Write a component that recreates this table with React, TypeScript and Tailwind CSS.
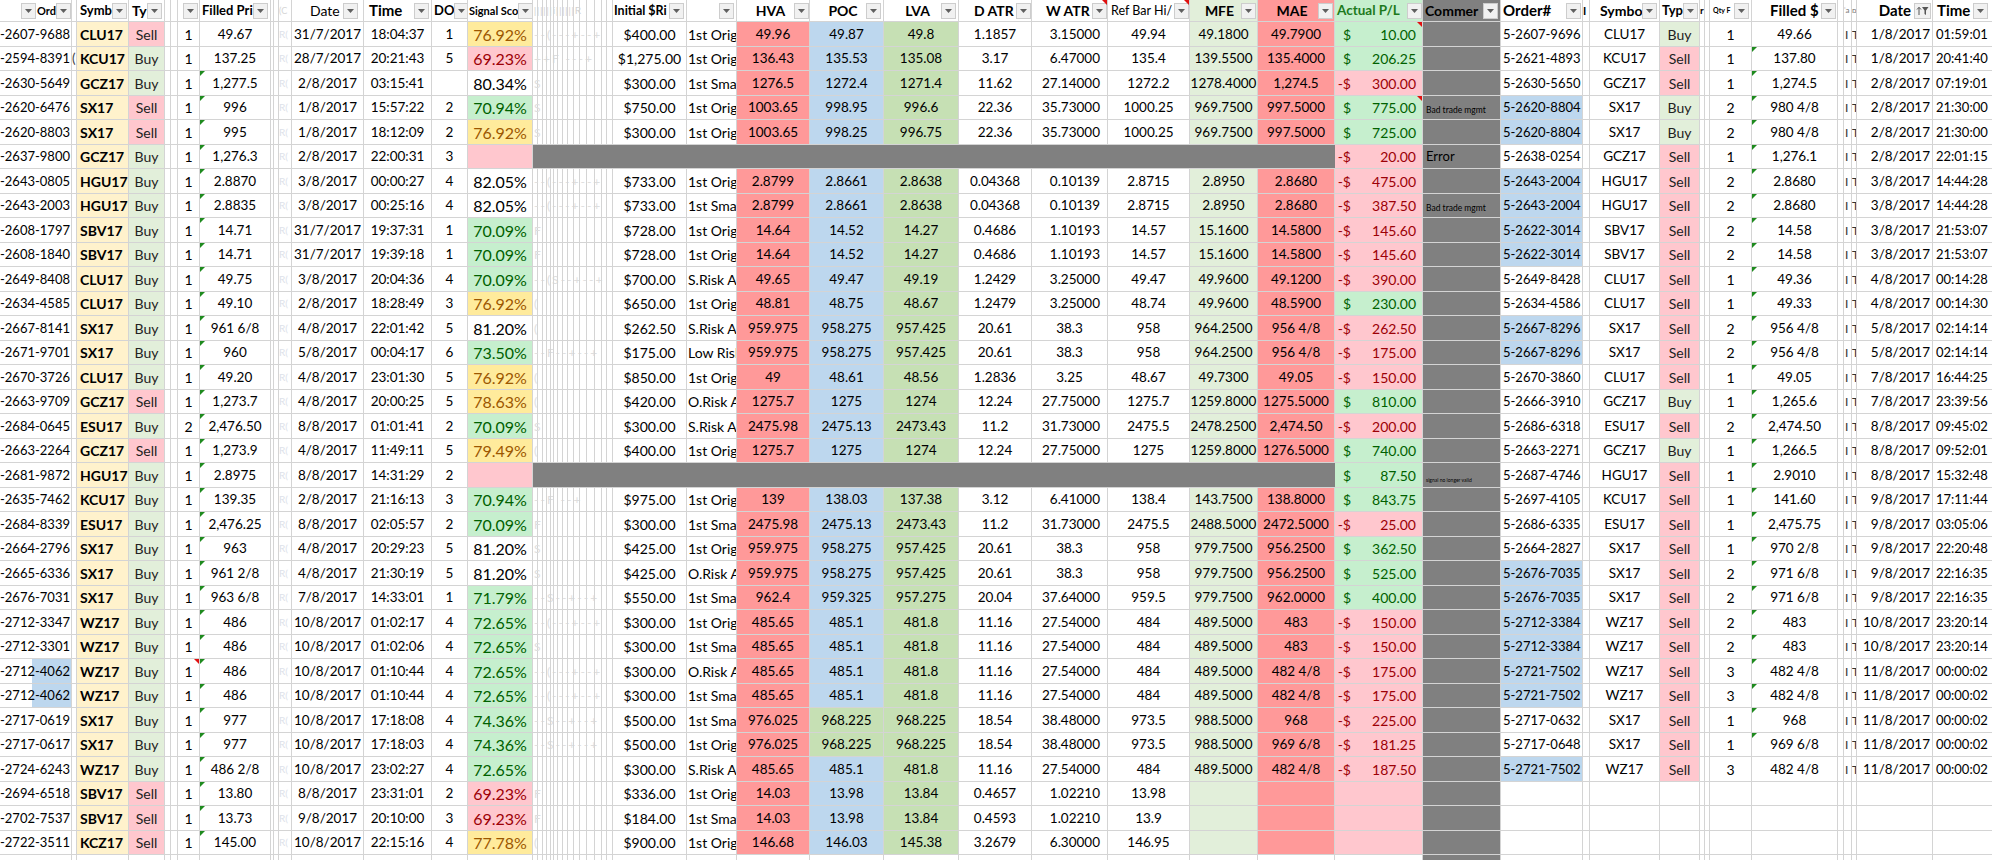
import React from 'react';

type Tone = 'y' | 'p' | 'g' | 'w';
// left | middle | P/L | comment | right
type RowData = [string, string, string, string, string];

const ROWS: RowData[] = [
  ['-2607-9688|CLU17|Sell|1|49.67|31/7/2017|18:04:37|1|76.92%|y', '$400.00|1st Orig|49.96|49.87|49.8|1.1857|3.15000|49.94|49.1800|49.7900', '10.00', '', '5-2607-9696|CLU17|Buy|1|49.66|1/8/2017|01:59:01'],
  ['-2594-8391|KCU17|Buy|1|137.25|28/7/2017|20:21:43|5|69.23%|p', '$1,275.00|1st Orig|136.43|135.53|135.08|3.17|6.47000|135.4|139.5500|135.4000', '206.25', '', '5-2621-4893|KCU17|Sell|1|137.80|1/8/2017|20:41:40'],
  ['-2630-5649|GCZ17|Buy|1|1,277.5|2/8/2017|03:15:41||80.34%|w', '$300.00|1st Sma|1276.5|1272.4|1271.4|11.62|27.14000|1272.2|1278.4000|1,274.5', '-300.00', '', '5-2630-5650|GCZ17|Sell|1|1,274.5|2/8/2017|07:19:01'],
  ['-2620-6476|SX17|Sell|1|996|1/8/2017|15:57:22|2|70.94%|g', '$750.00|1st Orig|1003.65|998.95|996.6|22.36|35.73000|1000.25|969.7500|997.5000', '775.00', 'Bad trade mgmt', '5-2620-8804|SX17|Buy|2|980 4/8|2/8/2017|21:30:00'],
  ['-2620-8803|SX17|Sell|1|995|1/8/2017|18:12:09|2|76.92%|y', '$300.00|1st Orig|1003.65|998.25|996.75|22.36|35.73000|1000.25|969.7500|997.5000', '725.00', '', '5-2620-8804|SX17|Buy|2|980 4/8|2/8/2017|21:30:00'],
  ['-2637-9800|GCZ17|Buy|1|1,276.3|2/8/2017|22:00:31|3||p', '', '-20.00', 'Error', '5-2638-0254|GCZ17|Sell|1|1,276.1|2/8/2017|22:01:15'],
  ['-2643-0805|HGU17|Buy|1|2.8870|3/8/2017|00:00:27|4|82.05%|w', '$733.00|1st Orig|2.8799|2.8661|2.8638|0.04368|0.10139|2.8715|2.8950|2.8680', '-475.00', '', '5-2643-2004|HGU17|Sell|2|2.8680|3/8/2017|14:44:28'],
  ['-2643-2003|HGU17|Buy|1|2.8835|3/8/2017|00:25:16|4|82.05%|w', '$733.00|1st Sma|2.8799|2.8661|2.8638|0.04368|0.10139|2.8715|2.8950|2.8680', '-387.50', 'Bad trade mgmt', '5-2643-2004|HGU17|Sell|2|2.8680|3/8/2017|14:44:28'],
  ['-2608-1797|SBV17|Buy|1|14.71|31/7/2017|19:37:31|1|70.09%|g', '$728.00|1st Orig|14.64|14.52|14.27|0.4686|1.10193|14.57|15.1600|14.5800', '-145.60', '', '5-2622-3014|SBV17|Sell|2|14.58|3/8/2017|21:53:07'],
  ['-2608-1840|SBV17|Buy|1|14.71|31/7/2017|19:39:18|1|70.09%|g', '$728.00|1st Orig|14.64|14.52|14.27|0.4686|1.10193|14.57|15.1600|14.5800', '-145.60', '', '5-2622-3014|SBV17|Sell|2|14.58|3/8/2017|21:53:07'],
  ['-2649-8408|CLU17|Buy|1|49.75|3/8/2017|20:04:36|4|70.09%|g', '$700.00|S.Risk A|49.65|49.47|49.19|1.2429|3.25000|49.47|49.9600|49.1200', '-390.00', '', '5-2649-8428|CLU17|Sell|1|49.36|4/8/2017|00:14:28'],
  ['-2634-4585|CLU17|Buy|1|49.10|2/8/2017|18:28:49|3|76.92%|y', '$650.00|1st Orig|48.81|48.75|48.67|1.2479|3.25000|48.74|49.9600|48.5900', '230.00', '', '5-2634-4586|CLU17|Sell|1|49.33|4/8/2017|00:14:30'],
  ['-2667-8141|SX17|Buy|1|961 6/8|4/8/2017|22:01:42|5|81.20%|w', '$262.50|S.Risk A|959.975|958.275|957.425|20.61|38.3|958|964.2500|956 4/8', '-262.50', '', '5-2667-8296|SX17|Sell|2|956 4/8|5/8/2017|02:14:14'],
  ['-2671-9701|SX17|Buy|1|960|5/8/2017|00:04:17|6|73.50%|g', '$175.00|Low Risk|959.975|958.275|957.425|20.61|38.3|958|964.2500|956 4/8', '-175.00', '', '5-2667-8296|SX17|Sell|2|956 4/8|5/8/2017|02:14:14'],
  ['-2670-3726|CLU17|Buy|1|49.20|4/8/2017|23:01:30|5|76.92%|y', '$850.00|1st Orig|49|48.61|48.56|1.2836|3.25|48.67|49.7300|49.05', '-150.00', '', '5-2670-3860|CLU17|Sell|1|49.05|7/8/2017|16:44:25'],
  ['-2663-9709|GCZ17|Sell|1|1,273.7|4/8/2017|20:00:25|5|78.63%|y', '$420.00|O.Risk A|1275.7|1275|1274|12.24|27.75000|1275.7|1259.8000|1275.5000', '810.00', '', '5-2666-3910|GCZ17|Buy|1|1,265.6|7/8/2017|23:39:56'],
  ['-2684-0645|ESU17|Buy|2|2,476.50|8/8/2017|01:01:41|2|70.09%|g', '$300.00|S.Risk A|2475.98|2475.13|2473.43|11.2|31.73000|2475.5|2478.2500|2,474.50', '-200.00', '', '5-2686-6318|ESU17|Sell|2|2,474.50|8/8/2017|09:45:02'],
  ['-2663-2264|GCZ17|Sell|1|1,273.9|4/8/2017|11:49:11|5|79.49%|y', '$400.00|1st Orig|1275.7|1275|1274|12.24|27.75000|1275|1259.8000|1276.5000', '740.00', '', '5-2663-2271|GCZ17|Buy|1|1,266.5|8/8/2017|09:52:01'],
  ['-2681-9872|HGU17|Buy|1|2.8975|8/8/2017|14:31:29|2||p', '', '87.50', 'signal no longer valid', '5-2687-4746|HGU17|Sell|1|2.9010|8/8/2017|15:32:48'],
  ['-2635-7462|KCU17|Buy|1|139.35|2/8/2017|21:16:13|3|70.94%|g', '$975.00|1st Orig|139|138.03|137.38|3.12|6.41000|138.4|143.7500|138.8000', '843.75', '', '5-2697-4105|KCU17|Sell|1|141.60|9/8/2017|17:11:44'],
  ['-2684-8339|ESU17|Buy|1|2,476.25|8/8/2017|02:05:57|2|70.09%|g', '$300.00|1st Sma|2475.98|2475.13|2473.43|11.2|31.73000|2475.5|2488.5000|2472.5000', '-25.00', '', '5-2686-6335|ESU17|Sell|1|2,475.75|9/8/2017|03:05:06'],
  ['-2664-2796|SX17|Buy|1|963|4/8/2017|20:29:23|5|81.20%|w', '$425.00|1st Orig|959.975|958.275|957.425|20.61|38.3|958|979.7500|956.2500', '362.50', '', '5-2664-2827|SX17|Sell|1|970 2/8|9/8/2017|22:20:48'],
  ['-2665-6336|SX17|Buy|1|961 2/8|4/8/2017|21:30:19|5|81.20%|w', '$425.00|O.Risk A|959.975|958.275|957.425|20.61|38.3|958|979.7500|956.2500', '525.00', '', '5-2676-7035|SX17|Sell|2|971 6/8|9/8/2017|22:16:35'],
  ['-2676-7031|SX17|Buy|1|963 6/8|7/8/2017|14:33:01|1|71.79%|g', '$550.00|1st Sma|962.4|959.325|957.275|20.04|37.64000|959.5|979.7500|962.0000', '400.00', '', '5-2676-7035|SX17|Sell|2|971 6/8|9/8/2017|22:16:35'],
  ['-2712-3347|WZ17|Buy|1|486|10/8/2017|01:02:17|4|72.65%|g', '$300.00|1st Orig|485.65|485.1|481.8|11.16|27.54000|484|489.5000|483', '-150.00', '', '5-2712-3384|WZ17|Sell|2|483|10/8/2017|23:20:14'],
  ['-2712-3301|WZ17|Buy|1|486|10/8/2017|01:02:06|4|72.65%|g', '$300.00|1st Sma|485.65|485.1|481.8|11.16|27.54000|484|489.5000|483', '-150.00', '', '5-2712-3384|WZ17|Sell|2|483|10/8/2017|23:20:14'],
  ['-2712-4062|WZ17|Buy|1|486|10/8/2017|01:10:44|4|72.65%|g', '$300.00|O.Risk A|485.65|485.1|481.8|11.16|27.54000|484|489.5000|482 4/8', '-175.00', '', '5-2721-7502|WZ17|Sell|3|482 4/8|11/8/2017|00:00:02'],
  ['-2712-4062|WZ17|Buy|1|486|10/8/2017|01:10:44|4|72.65%|g', '$300.00|1st Sma|485.65|485.1|481.8|11.16|27.54000|484|489.5000|482 4/8', '-175.00', '', '5-2721-7502|WZ17|Sell|3|482 4/8|11/8/2017|00:00:02'],
  ['-2717-0619|SX17|Buy|1|977|10/8/2017|17:18:08|4|74.36%|g', '$500.00|1st Sma|976.025|968.225|968.225|18.54|38.48000|973.5|988.5000|968', '-225.00', '', '5-2717-0632|SX17|Sell|1|968|11/8/2017|00:00:02'],
  ['-2717-0617|SX17|Buy|1|977|10/8/2017|17:18:03|4|74.36%|g', '$500.00|1st Orig|976.025|968.225|968.225|18.54|38.48000|973.5|988.5000|969 6/8', '-181.25', '', '5-2717-0648|SX17|Sell|1|969 6/8|11/8/2017|00:00:02'],
  ['-2724-6243|WZ17|Buy|1|486 2/8|10/8/2017|23:02:27|4|72.65%|g', '$300.00|S.Risk A|485.65|485.1|481.8|11.16|27.54000|484|489.5000|482 4/8', '-187.50', '', '5-2721-7502|WZ17|Sell|3|482 4/8|11/8/2017|00:00:02'],
  ['-2694-6518|SBV17|Sell|1|13.80|8/8/2017|23:31:01|2|69.23%|p', '$336.00|1st Orig|14.03|13.98|13.84|0.4657|1.02210|13.98||', '', '', ''],
  ['-2702-7537|SBV17|Sell|1|13.73|9/8/2017|20:10:00|3|69.23%|p', '$184.00|1st Sma|14.03|13.98|13.84|0.4593|1.02210|13.9||', '', '', ''],
  ['-2722-3511|KCZ17|Sell|1|145.00|10/8/2017|22:15:16|4|77.78%|y', '$900.00|1st Orig|146.68|146.03|145.38|3.2679|6.30000|146.95||', '', '', ''],
];

// leftover helper text in the hidden-ish narrow columns
const FAINT = [
  '--(---+--+', '++F ---+', 'S', 'S', 'S', '', '--(---+--+', '--(---+--+', 'F', 'F', '--(S--+--+', '(', '(', '--F--+--+', '(', '(', 'S',
  '(', '', '--F --+', 'F', 'S', 'S', '--S--+--+', '--(---+--+', 'S', '--(---+--+', '--(---+--+', '--S--+--+', '--S--+--+', '', 'F', 'F', '(',
];

const BLUE_ORDER = new Set([3, 4, 6, 7, 8, 9, 12, 13, 22, 23, 24, 25, 26, 27, 30]);
const BLUE_LEFT = new Set([26, 27]);
const POC_GREEN = new Set([28, 29]);
const PL_NOTE = new Set([0, 3]);

const NARROW = ['w-[5px]', 'w-[5px]', 'w-[4px]', 'w-[4px]', 'w-[3px]', 'w-[4px]', 'w-[5px]', 'w-[5px]', 'w-[6px]', 'w-[6px]', 'w-[7px]', 'w-[8px]', 'w-[7px]', 'w-[5px]', 'w-[6px]'];

const TONE: Record<Tone, string> = {
  y: 'bg-[#ffeb9c] text-[#9c5700]',
  p: 'bg-[#ffc7ce] text-[#9c0006]',
  g: 'bg-[#c6efce] text-[#006100]',
  w: 'bg-white text-black',
};

const cell = 'relative flex h-full shrink-0 items-center overflow-hidden whitespace-nowrap border-r border-[#d4d4d4]';
const spill = 'relative flex h-full shrink-0 items-center whitespace-nowrap border-r border-[#d4d4d4]';
const sideBg = (t: string) => (t === 'Sell' ? 'bg-[#ffc7ce]' : t === 'Buy' ? 'bg-[#e2efda]' : '');

const DD = ({ className = 'mr-[2px]' }: { className?: string }) => (
  <span className={`flex h-[16px] w-[15px] shrink-0 items-center justify-center border border-[#cdcdcd] bg-[#f1f1f1] ${className}`}>
    <svg width="7" height="4" viewBox="0 0 7 4">
      <path d="M0 0h7L3.5 4z" fill="#5f5f5f" />
    </svg>
  </span>
);

const GreenTick = () => <span className="absolute left-0 top-0 h-0 w-0 border-r-[5px] border-t-[5px] border-r-transparent border-t-[#1e8a1e]" />;
const RedTick = () => <span className="absolute right-0 top-0 h-0 w-0 border-l-[5px] border-t-[5px] border-l-transparent border-t-[#e01010]" />;

const Header: React.FC = () => (
  <div className="flex h-[22px] border-b border-[#d4d4d4] text-[14px] font-bold text-black">
    <div className={`${cell} w-[72px] pl-[21px]`}>
      <DD className="" />
      <span className="flex-1 pl-[1px] text-[11px]">Ord</span>
      <DD />
    </div>
    <div className={`${cell} w-[5px]`} />
    <div className={`${cell} w-[52px]`}>
      <span className="flex-1 pl-[3px] text-[13px]">Symb</span>
      <DD className="mr-[1px]" />
    </div>
    <div className={`${cell} w-[36px]`}>
      <span className="flex-1 pl-[3px]">Ty</span>
      <DD />
    </div>
    <div className={`${cell} w-[6px]`} />
    <div className={`${cell} w-[7px]`} />
    <div className={`${cell} w-[22px] justify-end`}>
      <DD className="mr-[1px]" />
    </div>
    <div className={`${cell} w-[71px]`}>
      <span className="flex-1 pl-[2px] text-[13px]">Filled Pri</span>
      <DD className="mr-[2px]" />
    </div>
    <div className={`${cell} w-[3px]`} />
    <div className={`${cell} w-[5px]`} />
    <div className={`${cell} w-[13px] text-[9px] font-normal text-[#d6d6d6]`}>(C</div>
    <div className={`${cell} w-[72px]`}>
      <span className="flex-1 pl-[18px] font-normal">Date</span>
      <DD className="mr-[5px]" />
    </div>
    <div className={`${cell} w-[68px]`}>
      <span className="flex-1 pl-[5px] text-[15px]">Time</span>
      <DD />
    </div>
    <div className={`${cell} w-[36px]`}>
      <span className="flex-1 pl-[2px] text-[13px]">DO</span>
      <DD />
    </div>
    <div className={`${cell} w-[65px]`}>
      <span className="flex-1 pl-[1px] text-[11px]">Signal Sco</span>
      <DD className="mr-[0px]" />
    </div>
    {NARROW.map((w, k) => (
      <div key={k} className={`${k === 0 ? spill : cell} ${w} text-[10px] font-normal text-[#d2d2d2]`}>
        {k === 0 ? <span className="pl-[1px] tracking-[1px]">ǀǀǀǀǀǀiǀǀǀǀǀǀR</span> : null}
      </div>
    ))}
    <div className={`${cell} w-[74px]`}>
      <span className="flex-1 pl-[1px] text-[12.5px]">Initial $Ri</span>
      <DD />
    </div>
    <div className={`${cell} w-[50px] justify-end`}>
      <DD />
    </div>
    <div className={`${cell} w-[73px]`}>
      <span className="flex-1 pl-[10px] text-center">HVA</span>
      <DD className="mr-[0px]" />
    </div>
    <div className={`${cell} w-[74px]`}>
      <span className="flex-1 pl-[10px] text-center">POC</span>
      <DD />
    </div>
    <div className={`${cell} w-[75px]`}>
      <span className="flex-1 pl-[10px] text-center">LVA</span>
      <DD />
    </div>
    <div className={`${cell} w-[73px]`}>
      <span className="flex-1 pl-[15px]">D ATR</span>
      <DD className="mr-[0px]" />
    </div>
    <div className={`${cell} w-[76px]`}>
      <span className="flex-1 pl-[14px]">W ATR</span>
      <DD className="mr-[0px]" />
      <RedTick />
    </div>
    <div className={`${cell} w-[82px]`}>
      <span className="flex-1 pl-[3px] text-[12.5px] font-normal">Ref Bar Hi/</span>
      <DD className="mr-[0px]" />
      <RedTick />
    </div>
    <div className={`${cell} w-[68px] bg-[#e2efda]`}>
      <span className="flex-1 pl-[8px] text-center">MFE</span>
      <DD className="mr-[1px]" />
    </div>
    <div className={`${cell} w-[77px] bg-[#ff9999]`}>
      <span className="flex-1 pl-[8px] text-center">MAE</span>
      <DD className="mr-[1px]" />
    </div>
    <div className={`${cell} w-[88px] bg-[#c6efce]`}>
      <span className="flex-1 pl-[2px] text-[13.5px] text-[#1d7a1d]">Actual P/L</span>
      <DD className="mr-[0px]" />
    </div>
    <div className={`${cell} w-[78px] bg-[#808080]`}>
      <span className="flex-1 pl-[2px]">Commer</span>
      <DD />
    </div>
    <div className={`${cell} w-[82px]`}>
      <span className="flex-1 pl-[2px] text-[15px]">Order#</span>
      <DD className="mr-[1px]" />
    </div>
    <div className={`${cell} w-[7px] text-[11px]`}>I</div>
    <div className={`${cell} w-[70px]`}>
      <span className="flex-1 pl-[10px] text-[14px]">Symbo</span>
      <DD />
    </div>
    <div className={`${cell} w-[40px]`}>
      <span className="flex-1 pl-[2px] text-[13px]">Typ</span>
      <DD className="mr-[1px]" />
    </div>
    <div className={`${cell} w-[5px] text-[10px]`}>r</div>
    <div className={`${cell} w-[5px]`} />
    <div className={`${cell} w-[42px]`}>
      <span className="flex-1 pl-[3px] text-[7px]">Qty F</span>
      <DD />
    </div>
    <div className={`${cell} w-[86px]`}>
      <span className="flex-1 pl-[18px] text-[15px]">Filled $</span>
      <DD className="mr-[1px]" />
    </div>
    <div className={`${cell} w-[6px]`} />
    <div className={`${cell} w-[8px] text-[8px] font-normal text-[#777]`}>ʾa</div>
    <div className={`${cell} w-[5px] text-[8px] font-normal text-[#777]`}>ɒ</div>
    <div className={`${cell} w-[76px]`}>
      <span className="flex-1 pr-[3px] text-right text-[15px]">Date</span>
      <span className="mr-[1px] flex h-[16px] w-[17px] shrink-0 items-center justify-center border border-[#cdcdcd] bg-[#f1f1f1]">
        <svg width="13" height="10" viewBox="0 0 13 10">
          <path d="M3 9V1.5M1 3.5l2-2.2 2 2.2" stroke="#555" strokeWidth="1" fill="none" />
          <path d="M6 1h6.5L10 4.5V9L8.5 8V4.5z" fill="#555" />
        </svg>
      </span>
    </div>
    <div className={`${cell} w-[59px] border-r-0`}>
      <span className="flex-1 pl-[4px] text-[15px]">Time</span>
      <DD className="mr-[4px]" />
    </div>
  </div>
);

const DataRow: React.FC<{ row: RowData; i: number }> = ({ row, i }) => {
  const [l, m, pl, com, r] = row;
  const L = l.split('|');
  const M = m ? m.split('|') : null;
  const R = r ? r.split('|') : null;
  const tone = L[9] as Tone;
  const neg = pl.startsWith('-');
  const h = i % 2 === 0 ? 'h-[25px]' : 'h-[24px]';
  const watrRight = M ? /\.\d{5}$/.test(M[6]) : false;

  return (
    <div className={`flex border-b border-[#d4d4d4] text-[13.5px] text-black ${h}`}>
      <div className={`${cell} w-[72px] text-[13px] ${BLUE_LEFT.has(i) ? 'bg-[linear-gradient(to_right,#fff_32px,#bdd7ee_32px)]' : ''}`}>{L[0]}</div>
      <div className={`${cell} w-[5px] text-[#444]`}>{i === 1 ? '(' : ''}</div>
      <div className={`${cell} w-[52px] bg-[#fff2cc] pl-[3px] text-[14px] font-bold`}>{L[1]}</div>
      <div className={`${cell} w-[36px] justify-center text-[14px] text-[#222] ${sideBg(L[2])}`}>{L[2]}</div>
      <div className={`${cell} w-[6px]`} />
      <div className={`${cell} w-[7px]`} />
      <div className={`${cell} w-[22px] justify-center text-[14px]`}>
        {L[3]}
        {i === 26 ? <RedTick /> : null}
      </div>
      <div className={`${cell} w-[71px] justify-center`}>
        {i >= 2 ? <GreenTick /> : null}
        {L[4]}
      </div>
      <div className={`${cell} w-[3px]`} />
      <div className={`${cell} w-[5px]`} />
      <div className={`${cell} w-[13px] text-[10px] text-[#dde2ea]`}>R(</div>
      <div className={`${cell} w-[72px] justify-center`}>{L[5]}</div>
      <div className={`${cell} w-[68px] justify-center`}>{L[6]}</div>
      <div className={`${cell} w-[36px] justify-center`}>{L[7]}</div>
      <div className={`${cell} w-[65px] justify-center text-[16px] ${TONE[tone]}`}>{L[8]}</div>

      {M ? (
        <>
          {NARROW.map((w, k) => (
            <div key={k} className={`${k === 0 ? spill : cell} ${w} text-[12px] text-[#dedede]`}>
              {k === 0 && FAINT[i] ? <span className="pl-[1px] tracking-[2px]">{FAINT[i]}</span> : null}
            </div>
          ))}
          <div className={`${cell} w-[74px] justify-center text-[14px]`}>{M[0]}</div>
          <div className={`${cell} w-[50px] pl-[1px] text-[14px]`}>{M[1]}</div>
          <div className={`${cell} w-[73px] justify-center bg-[#ff9999]`}>{M[2]}</div>
          <div className={`${cell} w-[74px] justify-center ${POC_GREEN.has(i) ? 'bg-[#c6e0b4]' : 'bg-[#bdd7ee]'}`}>{M[3]}</div>
          <div className={`${cell} w-[75px] justify-center bg-[#c6e0b4]`}>{M[4]}</div>
          <div className={`${cell} w-[73px] justify-center`}>{M[5]}</div>
          <div className={`${cell} w-[76px] ${watrRight ? 'justify-end pr-[7px]' : 'justify-center'}`}>{M[6]}</div>
          <div className={`${cell} w-[82px] justify-center`}>{M[7]}</div>
          <div className={`${cell} w-[68px] justify-center bg-[#e2efda]`}>{M[8]}</div>
          <div className={`${cell} w-[77px] justify-center bg-[#ff9999]`}>{M[9]}</div>
        </>
      ) : (
        <div className="h-full w-[802px] shrink-0 bg-[#808080]" />
      )}

      <div className={`${cell} w-[88px] text-[14px] ${pl && !neg ? 'bg-[#c6efce] text-[#006100]' : 'bg-[#ffc7ce] text-[#9c0006]'}`}>
        {pl ? (
          <>
            <span className="w-[16px] shrink-0 text-right">{neg ? '-$' : '$'}</span>
            <span className="flex-1 pr-[6px] text-right">{neg ? pl.slice(1) : pl}</span>
          </>
        ) : null}
        {PL_NOTE.has(i) ? <RedTick /> : null}
      </div>
      <div className={`${cell} w-[78px] bg-[#808080] pl-[3px]`}>
        {com === 'Error' ? (
          <span className="text-[13px]">Error</span>
        ) : com === 'Bad trade mgmt' ? (
          <span className="pt-[5px] text-[8.5px]">Bad trade mgmt</span>
        ) : com ? (
          <span className="pt-[10px] text-[5px]">{com}</span>
        ) : null}
      </div>

      {R ? (
        <>
          <div className={`${cell} w-[82px] pl-[2px] text-[13px] ${BLUE_ORDER.has(i) ? 'bg-[#bdd7ee]' : ''}`}>{R[0]}</div>
          <div className={`${cell} w-[7px]`} />
          <div className={`${cell} w-[70px] justify-center`}>{R[1]}</div>
          <div className={`${cell} w-[40px] justify-center text-[14px] text-[#222] ${sideBg(R[2])}`}>{R[2]}</div>
          <div className={`${cell} w-[5px]`} />
          <div className={`${cell} w-[5px]`} />
          <div className={`${cell} w-[42px] justify-center text-[14px]`}>{R[3]}</div>
          <div className={`${cell} w-[86px] justify-center`}>
            {i >= 1 && i <= 29 ? <GreenTick /> : null}
            {R[4]}
          </div>
          <div className={`${cell} w-[6px]`} />
          <div className={`${cell} w-[8px] text-[12px] text-[#333]`}>
            <span className="pl-[1px]">I</span>
          </div>
          <div className={`${cell} w-[5px] text-[12px] text-[#333]`}>T</div>
          <div className={`${cell} w-[76px] justify-end pr-[2px]`}>{R[5]}</div>
          <div className={`${cell} w-[59px] border-r-0 pl-[3px] text-[13px]`}>{R[6]}</div>
        </>
      ) : (
        <EmptyRight />
      )}
    </div>
  );
};

const EmptyRight: React.FC = () => (
  <>
    <div className={`${cell} w-[82px]`} />
    <div className={`${cell} w-[7px]`} />
    <div className={`${cell} w-[70px]`} />
    <div className={`${cell} w-[40px]`} />
    <div className={`${cell} w-[5px]`} />
    <div className={`${cell} w-[5px]`} />
    <div className={`${cell} w-[42px]`} />
    <div className={`${cell} w-[86px]`} />
    <div className={`${cell} w-[6px]`} />
    <div className={`${cell} w-[8px]`} />
    <div className={`${cell} w-[5px]`} />
    <div className={`${cell} w-[76px]`} />
    <div className={`${cell} w-[59px] border-r-0`} />
  </>
);

const TailRow: React.FC = () => (
  <div className="flex h-[12px]">
    {['w-[72px]', 'w-[5px]', 'w-[52px]', 'w-[36px]', 'w-[6px]', 'w-[7px]', 'w-[22px]', 'w-[71px]', 'w-[3px]', 'w-[5px]', 'w-[13px]', 'w-[72px]', 'w-[68px]', 'w-[36px]', 'w-[65px]'].map((w, k) => (
      <div key={k} className={`${cell} ${w}`} />
    ))}
    {NARROW.map((w, k) => (
      <div key={`n${k}`} className={`${cell} ${w}`} />
    ))}
    {['w-[74px]', 'w-[50px]', 'w-[73px]', 'w-[74px]', 'w-[75px]', 'w-[73px]', 'w-[76px]', 'w-[82px]', 'w-[68px]', 'w-[77px]', 'w-[88px]'].map((w, k) => (
      <div key={`m${k}`} className={`${cell} ${w}`} />
    ))}
    <div className={`${cell} w-[78px] bg-[#808080]`} />
    <EmptyRight />
  </div>
);

const App: React.FC = () => (
  <div className="h-[860px] w-[1992px] overflow-hidden bg-white font-['Lato',sans-serif] leading-[17px]">
    <Header />
    {ROWS.map((row, i) => (
      <DataRow key={i} row={row} i={i} />
    ))}
    <TailRow />
  </div>
);

export default App;
